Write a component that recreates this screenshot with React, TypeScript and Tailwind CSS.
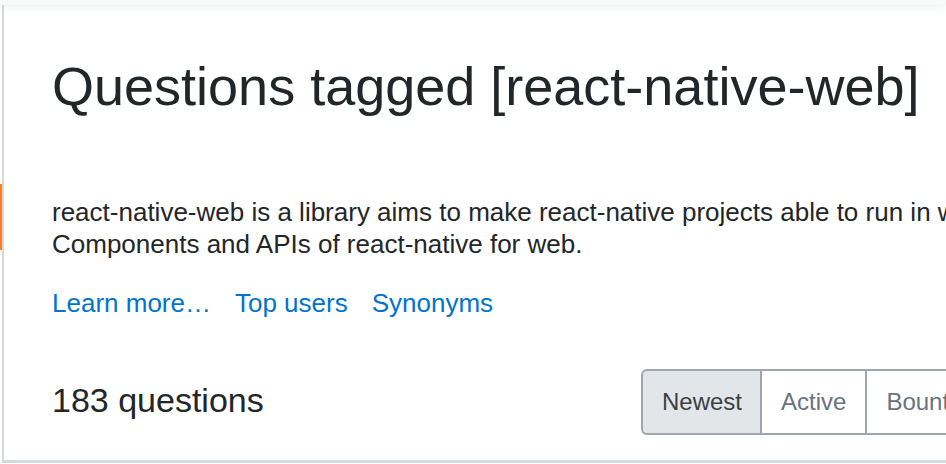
import React from 'react';

const tabs = ['Newest', 'Active', 'Bountied', 'Unanswered', 'More'];

const App: React.FC = () => {
  return (
    <div className="w-[946px] h-[464px] bg-white overflow-hidden flex flex-col font-['Liberation_Sans',Arial,sans-serif] text-[#232629]">
      {/* Top bar */}
      <div className="relative z-10 h-[5px] shrink-0 bg-[#f8f9f9] shadow-[0_1px_10px_rgba(0,0,0,0.1)]" />

      <div className="flex flex-1 min-h-0">
        {/* Left nav edge with active indicator */}
        <div className="w-[2px] shrink-0 flex flex-col">
          <div className="h-[179px]" />
          <div className="h-[66px] bg-[#f48225]" />
        </div>

        <div className="flex-1 flex flex-col min-w-0">
          <div className="flex-1 border-l-2 border-[#d6d9dc] pl-[48px] pt-[49px] overflow-hidden">
            <h1 className="text-[54px] leading-[64px] font-normal whitespace-nowrap">
              Questions tagged [react-native-web]
            </h1>

            <p className="mt-[78px] text-[26px] leading-[32px] whitespace-nowrap">
              react-native-web is a library aims to make react-native projects able to run in web browser by providing
              <br />
              Components and APIs of react-native for web.
            </p>

            <div className="mt-[27px] flex gap-[24px] text-[26px] leading-[32px] text-[#0074cc] whitespace-nowrap">
              <a href="#">Learn more…</a>
              <a href="#">Top users</a>
              <a href="#">Synonyms</a>
            </div>

            <div className="mt-[50px] flex items-start">
              <h2 className="w-[589px] shrink-0 mt-[11px] text-[34px] leading-[40px] font-normal whitespace-nowrap">
                183 questions
              </h2>
              <div className="flex shrink-0 h-[66px]">
                {tabs.map((t, i) => (
                  <button
                    key={t}
                    className={
                      i === 0
                        ? 'h-full pl-[19px] pr-[18px] border-2 border-[#9fa6ad] rounded-l-[6px] bg-[#e3e6e8] text-[#3b4045] text-[24px] whitespace-nowrap'
                        : 'h-full px-[19px] border-y-2 border-r-2 border-[#9fa6ad] bg-white text-[#6a737c] text-[24px] whitespace-nowrap'
                    }
                  >
                    {t}
                  </button>
                ))}
              </div>
            </div>
          </div>
          <div className="h-[3px] shrink-0 bg-[#d6d9dc]" />
          <div className="h-[1px] shrink-0" />
        </div>
      </div>
    </div>
  );
};

export default App;
